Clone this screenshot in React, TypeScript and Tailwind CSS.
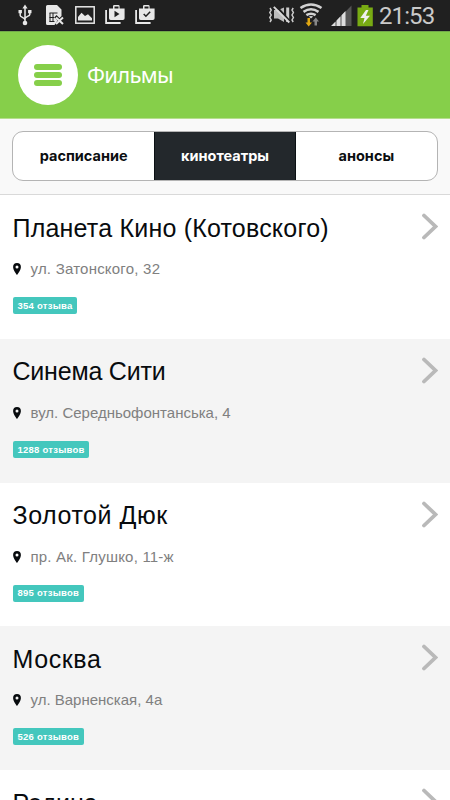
import React from "react";

type Cinema = { name: string; address: string; reviews: string; nameSpacing: string; addressSpacing: string };

const cinemas: Cinema[] = [
  { name: "Планета Кино (Котовского)", address: "ул. Затонского, 32", reviews: "354 отзыва", nameSpacing: "tracking-[0.2px]", addressSpacing: "tracking-[0.22px]" },
  { name: "Синема Сити", address: "вул. Середньофонтанська, 4", reviews: "1288 отзывов", nameSpacing: "tracking-[-0.2px]", addressSpacing: "tracking-[0px]" },
  { name: "Золотой Дюк", address: "пр. Ак. Глушко, 11-ж", reviews: "895 отзывов", nameSpacing: "tracking-[0.55px]", addressSpacing: "tracking-[0.2px]" },
  { name: "Москва", address: "ул. Варненская, 4а", reviews: "526 отзывов", nameSpacing: "tracking-[0.6px]", addressSpacing: "tracking-[0px]" },
  { name: "Родина", address: "ул. Мечникова, 104", reviews: "412 отзывов", nameSpacing: "tracking-[0px]", addressSpacing: "tracking-[0.2px]" },
];

function NotificationIcons() {
  return (
    <svg width="160" height="31" viewBox="0 0 160 31" fill="none">
      <g stroke="#e8e8e8" strokeWidth="1.5">
        <path d="M25 7v16M20.2 12v3.400c0 2 4.800 2 4.800 4.600M29.800 12v2.400c0 2-4.800 2-4.800 4.400" />
      </g>
      <g fill="#e8e8e8">
        <path d="M25 4.500l2.600 4h-5.200zM18.500 10h3.400v3.200h-3.400zM28.100 10h3.400v3.200h-3.400z" />
        <circle cx="25" cy="23" r="2.300" />
        <path d="M47.500 5H57l4.500 4.500V16l-2 2-3-3-2 2.200 3 3.300-3 4.500h-7a1.500 1.500 0 0 1-1.500-1.500V6.500A1.500 1.500 0 0 1 47.500 5z" />
      </g>
      <path d="M49.500 13h8M49.500 21.500h5M50 13v9M53 13v9M49.500 17.500h5" stroke="#202020" strokeWidth="1" />
      <path d="M56 17.500l7 6.500M63 17.500l-7 6.500" stroke="#e8e8e8" strokeWidth="2" />
      <rect x="75.800" y="6.800" width="18.400" height="16.400" stroke="#e8e8e8" strokeWidth="1.500" />
      <path d="M78 20.500V17l3.500-4.200 3.500 3.300 3-1.800 4 4v2.200z" fill="#e8e8e8" />
      {[0, 30].map((x) => (
        <g key={x} transform={`translate(${x} 0)`}>
          <path d="M106.100 10v13h14.500" stroke="#e8e8e8" strokeWidth="1.800" />
          <path d="M109 8.500h4V6.300q0-1.300 1.300-1.300h4q1.300 0 1.300 1.300v2.200h5v9.800q0 1.700-1.700 1.700h-12.200q-1.700 0-1.700-1.700zM114.500 6.500v2h4v-2z" fill="#e8e8e8" fillRule="evenodd" />
        </g>
      ))}
      <path d="M114.500 10.800v6.400l5-3.200z" fill="#202020" />
      <path d="M143.700 14l2.200 2.200 4.300-4.400" stroke="#202020" strokeWidth="1.500" />
    </svg>
  );
}

function SystemIcons() {
  return (
    <svg width="110" height="31" viewBox="266 0 110 31" fill="none">
      <path d="M274 10h4l6-2.500v14.500l-6-3.500H274z" fill="#bcbcbc" />
      <path d="M287.700 7.500v14.500" stroke="#ccc" strokeWidth="3" />
      <path d="M276 6l15 16.500" stroke="#202020" strokeWidth="2" />
      <path d="M273.800 6.800l15.500 15.700" stroke="#d8d8d8" strokeWidth="1.900" />
      <path d="M270 8l1.200 2-1.400 2.500 1.400 2.500-1.400 2.500 1.400 2.500-1.200 2M293.200 8l-1.200 2 1.400 2.500-1.400 2.500 1.400 2.500-1.400 2.500 1.200 2" stroke="#ccc" strokeWidth="1.500" />
      <g stroke="#d2d2d2" strokeWidth="2.600">
        <path d="M300.500 8q10.500-7 21 0" />
        <path d="M303.500 11.800q7.500-5 15 0" />
        <path d="M306.400 15.200q4.600-3 9.200 0" />
      </g>
      <path d="M308.800 16.500l2.200 2 2.200-2q-2.200-1.200-4.400 0z" fill="#d2d2d2" />
      <path d="M307.500 18h2.500v4.500h2l-3.300 4-3.200-4h2z" fill="#e2a812" />
      <path d="M314.500 25.500h2.500v-4h2l-3.200-4-3.300 4h2z" fill="#888" />
      <path d="M351.500 5.500V26h-20z" fill="#555" />
      <path d="M331 26l4.500-4.600V26zM336.500 26v-5.600l4-4.100V26zM341.500 26V15.300l4-4.200V26z" fill="#ddd" />
      <path d="M361.500 5h7v2.500h4.300V26.300h-15.300V7.500h4z" fill="#78ab13" />
      <path d="M366 10l-5.700 8h4.200l-1.500 6 7-8.200h-4.200l2.700-5.800z" fill="#efefef" />
    </svg>
  );
}

function StatusBar() {
  return (
    <div className="flex h-[31px] shrink-0 items-center justify-between border-b border-[#1b1622] bg-[#202020]">
      <NotificationIcons />
      <div className="flex items-center">
        <SystemIcons />
        <span className="w-[74px] pl-[3px] pt-[3px] font-[Roboto,sans-serif] text-[24px] leading-[29px] tracking-[-0.9px] text-[#cacaca]">21:53</span>
      </div>
    </div>
  );
}

function Header() {
  return (
    <header className="flex h-[88px] shrink-0 items-center border-b border-[#b5de8d] bg-[#86cf4a] pl-[18px] shadow-[inset_0_1px_0_#72a94b]">
      <button aria-label="Меню" className="flex size-[60px] flex-col items-center justify-center gap-[2px] rounded-full bg-white">
        <span className="h-[6px] w-7 rounded-full bg-[#86cf4a]" />
        <span className="h-[6px] w-7 rounded-full bg-[#86cf4a]" />
        <span className="h-[6px] w-7 rounded-full bg-[#86cf4a]" />
      </button>
      <h1 className="pb-[2px] pl-[9px] font-['Noto_Sans',sans-serif] text-[22px] leading-[30px] tracking-[-0.7px] text-white">Фильмы</h1>
    </header>
  );
}

function Tabs() {
  return (
    <nav className="flex h-[76px] shrink-0 border-b border-[#d9d9d9] bg-[#f9f9f9] px-3 pt-3 font-['Inter',sans-serif] text-[14.500px] font-bold text-[#0b0e10]">
      <div className="grid h-[50px] w-full grid-cols-3 overflow-hidden rounded-[11px] border border-[#b4b4b4] bg-white">
        <button className="pb-px">расписание</button>
        <button className="-my-px border border-[#0b1114] bg-[#23282c] pb-px text-white">кинотеатры</button>
        <button className="pb-px">анонсы</button>
      </div>
    </nav>
  );
}

function CinemaRow({ cinema }: { cinema: Cinema }) {
  return (
    <li className="flex h-[143.75px] shrink-0 justify-between pl-[12.5px] pr-3 odd:bg-white even:bg-[#f4f4f4]">
      <div className="flex flex-col items-start">
        <h2 className={`mt-[17.5px] whitespace-nowrap text-[25px] leading-[30px] text-[#080b0e] ${cinema.nameSpacing}`}>{cinema.name}</h2>
        <div className="mt-[16.5px] flex h-5 items-center">
          <svg width="8" height="12" viewBox="0 0 8 12">
            <path fill="#080b0e" fillRule="evenodd" d="M4 .1A3.900 3.900 0 0 0 .1 4C.1 7.300 4 11.900 4 11.900s3.900-4.600 3.900-7.900A3.900 3.900 0 0 0 4 .1zm0 2.400a1.500 1.500 0 1 1 0 3 1.500 1.500 0 0 1 0-3z" />
          </svg>
          <span className={`pl-[10px] text-[15px] leading-5 text-[#808080] ${cinema.addressSpacing}`}>{cinema.address}</span>
        </div>
        <span className="mt-[18px] flex h-[17px] items-center rounded-[2px] bg-[#44c7bd] pl-[5px] pr-[4.500px] text-[9.500px] font-bold leading-none tracking-[0.25px] text-white">{cinema.reviews}</span>
      </div>
      <svg className="mt-[18px]" width="17" height="27" viewBox="0 0 17 27" fill="none">
        <path d="M3 2.500l11.500 11L3 24.500" stroke="#b9b9b9" strokeWidth="3.800" strokeLinecap="round" strokeLinejoin="miter" />
      </svg>
    </li>
  );
}

export default function App() {
  return (
    <div className="flex h-[800px] w-[450px] flex-col overflow-hidden bg-white font-['Liberation_Sans',Arial,sans-serif]">
      <StatusBar />
      <Header />
      <Tabs />
      <ul className="flex flex-col">
        {cinemas.map((cinema) => (
          <CinemaRow key={cinema.name} cinema={cinema} />
        ))}
      </ul>
    </div>
  );
}
